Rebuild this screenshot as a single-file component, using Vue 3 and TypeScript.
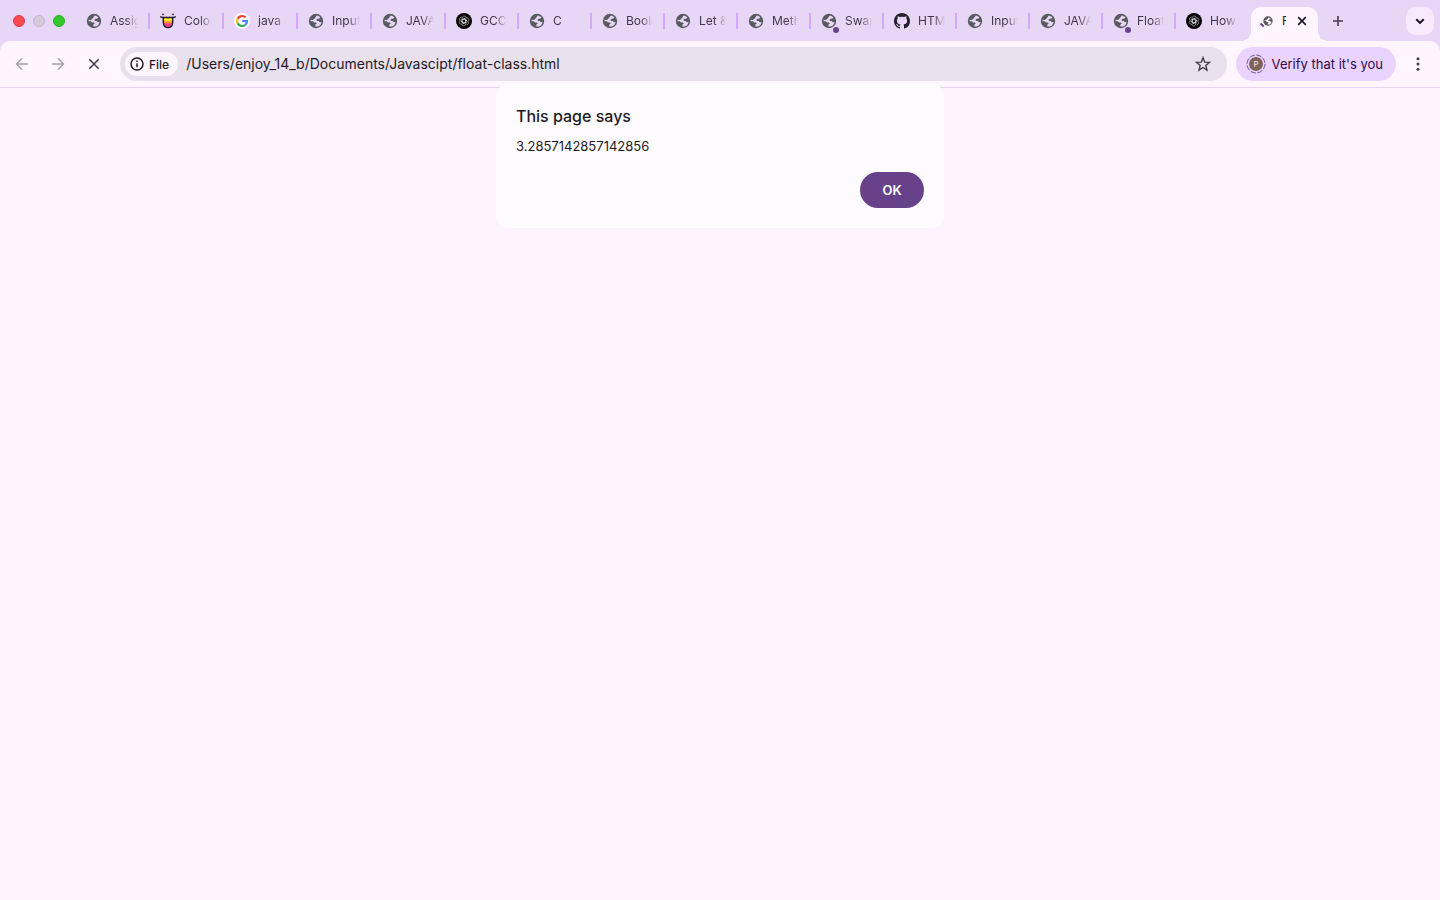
<script setup lang="ts">
import { ref } from 'vue'

type IconName = 'globe' | 'mask' | 'google' | 'gpt' | 'github'

interface Tab {
  title: string
  icon: IconName
  wide?: boolean
  dot?: boolean
}

const tabs: Tab[] = [
  { title: 'Assig', icon: 'globe', wide: true },
  { title: 'Color', icon: 'mask', wide: true },
  { title: 'java s', icon: 'google', wide: true },
  { title: 'Input', icon: 'globe', wide: true },
  { title: 'JAVA', icon: 'globe', wide: true },
  { title: 'GCC', icon: 'gpt' },
  { title: 'C', icon: 'globe' },
  { title: 'Boole', icon: 'globe' },
  { title: 'Let &', icon: 'globe' },
  { title: 'Meth', icon: 'globe' },
  { title: 'Swap', icon: 'globe', dot: true },
  { title: 'HTM', icon: 'github' },
  { title: 'Input', icon: 'globe' },
  { title: 'JAVA', icon: 'globe' },
  { title: 'Float', icon: 'globe', dot: true },
  { title: 'How', icon: 'gpt' },
]

const petals = [0, 60, 120, 180, 240, 300]
const url = ref('/Users/enjoy_14_b/Documents/Javascipt/float-class.html')
</script>

<template>
  <div class="browser">
    <header class="strip">
      <div class="lights">
        <button class="light red" aria-label="Close window"></button>
        <button class="light grey" aria-label="Minimise window"></button>
        <button class="light green" aria-label="Zoom window"></button>
      </div>
      <nav class="tabs" aria-label="Tabs">
        <button v-for="(tab, i) in tabs" :key="i" class="tab" :class="{ wide: tab.wide, last: i === tabs.length - 1 }">
          <span class="favicon">
            <svg v-if="tab.icon === 'globe'" viewBox="0 0 16 16">
              <circle cx="8" cy="8" r="7.200" fill="#575a5f" />
              <path d="M8.700 2.500c1.500.2 2.800.9 3.700 2.100l-1.300 1.200H9.600L8.300 7.100l.9.9h1.500l1 1.200 1.900-.2c-.3 2.200-1.800 4-4 4.500H7.300v-1.800l1.500-1.100-.9-1.200H6.100L4.800 8.200H2.500c0-.6.1-1 .2-1.400l2.200.3L6.800 5.200z" fill="#e8d6f6" />
            </svg>
            <svg v-else-if="tab.icon === 'mask'" viewBox="0 0 16 16">
              <path d="M3.200 4.200h9.600v5.300c0 3-2 5.200-4.800 5.200s-4.800-2.200-4.800-5.200z" fill="#ffe51f" />
              <path d="M3.500 8.200h9v3h-9z" fill="#ff9434" />
              <path d="M3.600 10.300h8.800c-.5 2.700-2.100 4.200-4.400 4.200s-3.900-1.500-4.400-4.200z" fill="#f0428d" />
              <path d="M.3 3.600c1.200.9 2.100.9 3 .9h9.400c.9 0 1.800 0 3-.9M3.300 4.500v5c0 3 2 5.100 4.700 5.100s4.700-2.100 4.700-5.100v-5" fill="none" stroke="#21182b" stroke-width="1.400" />
              <circle cx="3" cy="1.300" r=".9" fill="#21182b" />
              <circle cx="13" cy="1.300" r=".9" fill="#21182b" />
            </svg>
            <svg v-else-if="tab.icon === 'google'" viewBox="0 0 16 16">
              <circle cx="8" cy="8" r="8" fill="#fff" />
              <g fill="none" stroke-width="2.200">
                <path d="M11.600 4.500A5 5 0 0 0 3.600 5.700" stroke="#ea4335" />
                <path d="M3.600 5.700a5 5 0 0 0 0 4.600" stroke="#fbbc05" />
                <path d="M3.600 10.300a5 5 0 0 0 7.700 1.500" stroke="#34a853" />
                <path d="M11.300 11.800A5 5 0 0 0 12.900 8H8.200" stroke="#4285f4" />
              </g>
            </svg>
            <svg v-else-if="tab.icon === 'gpt'" viewBox="0 0 16 16">
              <circle cx="8" cy="8" r="8" fill="#000" />
              <g fill="none" stroke="#d9d6db" stroke-width=".6">
                <path v-for="a in petals" :key="a" :transform="`rotate(${a} 8 8)`" d="M6.200 9V5.100a2.200 2.200 0 0 1 4-1.200M6.200 7l2-1.200 2.900 1.700" />
              </g>
            </svg>
            <svg v-else viewBox="0 0 16 16">
              <path fill="#24202b" d="M8 0C3.580 0 0 3.580 0 8c0 3.540 2.290 6.530 5.470 7.590.4.070.55-.17.55-.38 0-.19-.01-.82-.01-1.490-2.010.37-2.530-.49-2.690-.94-.09-.23-.48-.94-.82-1.130-.28-.15-.68-.52-.01-.53.63-.01 1.080.58 1.230.82.72 1.210 1.870.87 2.330.66.07-.52.28-.87.51-1.070-1.780-.2-3.640-.89-3.640-3.950 0-.87.31-1.590.82-2.150-.08-.2-.36-1.020.08-2.120 0 0 .67-.21 2.200.82.64-.18 1.320-.27 2-.27s1.360.09 2 .27c1.530-1.040 2.200-.82 2.200-.82.44 1.100.16 1.920.08 2.120.51.56.82 1.270.82 2.150 0 3.070-1.870 3.750-3.650 3.950.29.25.54.73.54 1.480 0 1.070-.01 1.930-.01 2.200 0 .21.15.46.55.38A8.010 8.010 0 0 0 16 8c0-4.420-3.580-8-8-8z" />
            </svg>
            <i v-if="tab.dot" class="dot"></i>
          </span>
          <span class="title">{{ tab.title }}</span>
        </button>
      </nav>
      <div class="active">
        <svg class="loading" viewBox="0 0 16 16">
          <circle cx="9" cy="8" r="4.700" fill="#575a5f" />
          <path d="M9.400 4.400l2.400 1.400-.8.800H10l-.8.800.6.600h1l.6.8 1.200-.1c-.2 1.400-1.200 2.600-2.600 2.900H8.600v-1.200l.9-.7-.5-.8H7.800L7 8.100H5.500l.1-.8 1.400.1 1.200-1.200z" fill="#fef5fe" />
          <path d="M1.500 10.600l3.200 2.900" fill="none" stroke="#67418a" stroke-width="2" />
        </svg>
        <span class="active-title">F</span>
        <button class="plain" aria-label="Close tab">
          <svg viewBox="0 0 16 16" width="16" height="16"><path d="M4.200 4.200l7.600 7.600M11.800 4.200l-7.600 7.600" stroke="#1f1728" stroke-width="1.700" /></svg>
        </button>
      </div>
      <button class="plain new-tab" aria-label="New tab">
        <svg viewBox="0 0 16 16" width="16" height="16"><path d="M8 3v10M3 8h10" stroke="#463b50" stroke-width="1.600" /></svg>
      </button>
      <button class="search" aria-label="Search tabs">
        <svg viewBox="0 0 16 16" width="16" height="16"><path d="M4.300 6.200L8 9.900l3.700-3.700" fill="none" stroke="#1b1224" stroke-width="2" /></svg>
      </button>
    </header>

    <div class="toolbar">
      <div class="nav">
        <button class="plain" aria-label="Back">
          <svg viewBox="0 0 16 16" width="16" height="16"><path d="M14 8H3M8 2.500L2.500 8 8 13.500" fill="none" stroke="#a9a0ad" stroke-width="1.500" /></svg>
        </button>
        <button class="plain" aria-label="Forward">
          <svg viewBox="0 0 16 16" width="16" height="16"><path d="M2 8h11M8 2.500L13.500 8 8 13.500" fill="none" stroke="#a9a0ad" stroke-width="1.500" /></svg>
        </button>
        <button class="plain" aria-label="Stop loading">
          <svg viewBox="0 0 16 16" width="16" height="16"><path d="M3.300 3.300l9.400 9.400M12.700 3.300l-9.400 9.400" stroke="#463b50" stroke-width="1.600" /></svg>
        </button>
      </div>
      <div class="omnibox">
        <button class="chip">
          <svg viewBox="0 0 16 16" width="16" height="16">
            <circle cx="8" cy="8" r="6" fill="none" stroke="#1f1b22" stroke-width="1.500" />
            <path d="M8 7.200v4" stroke="#1f1b22" stroke-width="1.500" />
            <path d="M8 4.500v1.500" stroke="#1f1b22" stroke-width="1.500" />
          </svg>
          <span>File</span>
        </button>
        <input v-model="url" class="url" type="text" aria-label="Address" spellcheck="false" />
        <button class="plain" aria-label="Bookmark this page">
          <svg viewBox="0 0 16 16" width="16" height="16"><path d="M8 1.700l1.700 4.400 4.800.3-3.700 3 1.200 4.700L8 11.500l-4 2.600 1.200-4.700-3.700-3 4.800-.3z" fill="none" stroke="#463f4b" stroke-width="1.400" /></svg>
        </button>
      </div>
      <button class="profile">
        <svg viewBox="0 0 20 20" width="20" height="20">
          <circle cx="10" cy="10" r="9" fill="none" stroke="#76539a" stroke-width="1" stroke-dasharray="5.500 1.570" />
          <circle cx="10" cy="10" r="7" fill="#7f6259" />
          <text x="10" y="13" text-anchor="middle" class="initial">P</text>
        </svg>
        <span>Verify that it's you</span>
      </button>
      <button class="plain menu" aria-label="Menu">
        <svg viewBox="0 0 16 16" width="16" height="16" fill="#463b50"><circle cx="8" cy="2.800" r="1.500" /><circle cx="8" cy="8" r="1.500" /><circle cx="8" cy="13.200" r="1.500" /></svg>
      </button>
    </div>

    <main class="page"></main>

    <section class="dialog" role="alertdialog" aria-labelledby="dialog-title" aria-describedby="dialog-text">
      <h1 id="dialog-title">This page says</h1>
      <p id="dialog-text">3.2857142857142856</p>
      <button class="ok">OK</button>
    </section>
  </div>
</template>

<style>
body {
  background: #fef5fe;
}
</style>

<style scoped>
.browser {
  position: relative;
  display: flex;
  flex-direction: column;
  min-height: 100vh;
  background: #fef5fe;
  font-family: Inter, "Liberation Sans", sans-serif;
  color: #1e1a22;
}
.browser * {
  box-sizing: border-box;
}
button {
  font-family: inherit;
  color: inherit;
  border: 0;
  padding: 0;
  margin: 0;
  background: none;
}
svg {
  display: block;
  flex: none;
}
.plain {
  display: flex;
  flex: none;
}
.strip {
  display: flex;
  align-items: center;
  height: 51px;
  padding: 0 6px 10px 13px;
  margin-bottom: -10px;
  background: #e8d6f6;
}
.lights {
  display: flex;
  flex: none;
  gap: 8px;
  width: 63px;
}
.light {
  width: 12px;
  height: 12px;
  border-radius: 50%;
  border: 1px solid;
}
.red {
  background: #fb4a51;
  border-color: #dc3a48;
}
.grey {
  background: #d6cadb;
  border-color: #c2b4c9;
}
.green {
  background: #35c82f;
  border-color: #27ae27;
}
.tabs {
  display: flex;
  min-width: 0;
}
.tab {
  display: flex;
  align-items: center;
  gap: 8px;
  flex: 0 1 auto;
  width: 73px;
  min-width: 0;
  height: 16px;
  padding: 0 10px;
  border-right: 2px solid #d2a8ff;
  font-size: 12px;
  line-height: 16px;
  color: #41364b;
}
.tab.wide {
  width: 74px;
}
.tab.last {
  border-right-color: transparent;
}
.favicon {
  position: relative;
  flex: none;
  width: 16px;
  height: 16px;
}
.dot {
  position: absolute;
  right: -2px;
  bottom: -4px;
  width: 6px;
  height: 6px;
  border-radius: 50%;
  background: #67418a;
}
.title {
  flex: 1;
  min-width: 0;
  overflow: hidden;
  white-space: nowrap;
  text-align: left;
  mask-image: linear-gradient(to right, #000 calc(100% - 12px), transparent);
}
.active {
  position: relative;
  display: flex;
  align-items: center;
  flex: none;
  align-self: flex-end;
  width: 67px;
  height: 34px;
  margin-left: 2px;
  padding: 0 8px 7px;
  border-radius: 10px 10px 0 0;
  background: #fef5fe;
  font-size: 12px;
}
.active::before,
.active::after {
  content: "";
  position: absolute;
  bottom: 0;
  width: 10px;
  height: 10px;
}
.active::before {
  right: 100%;
  background: radial-gradient(circle at 0 0, transparent 10px, #fef5fe 10px);
}
.active::after {
  left: 100%;
  background: radial-gradient(circle at 100% 0, transparent 10px, #fef5fe 10px);
}
.loading {
  width: 16px;
  height: 16px;
  margin-right: 7px;
}
.active-title {
  width: 4px;
  margin-right: 8px;
  overflow: hidden;
  line-height: 16px;
}
.new-tab {
  margin-left: 12px;
}
.search {
  display: flex;
  align-items: center;
  justify-content: center;
  flex: none;
  width: 28px;
  height: 28px;
  margin-left: auto;
  border-radius: 10px;
  background: #f7eafd;
}
.toolbar {
  display: flex;
  align-items: center;
  height: 47px;
  padding: 0 14px;
  border-radius: 10px 10px 0 0;
  border-bottom: 1px solid #e8d6ee;
  background: #fef5fe;
}
.nav {
  display: flex;
  flex: none;
  gap: 20px;
}
.omnibox {
  display: flex;
  align-items: center;
  flex: 1;
  min-width: 0;
  height: 34px;
  margin-left: 18px;
  padding: 0 16px 0 5px;
  border-radius: 17px;
  background: #e9e0ed;
}
.chip {
  display: flex;
  align-items: center;
  flex: none;
  gap: 4px;
  height: 24px;
  padding: 0 9px 0 4px;
  border-radius: 12px;
  background: #fef5fe;
  font-size: 12px;
  font-weight: 500;
}
.url {
  flex: 1;
  min-width: 0;
  margin: 0 8px;
  padding: 0;
  border: 0;
  outline: 0;
  background: none;
  font-family: inherit;
  font-size: 14px;
  line-height: 20px;
  color: #1e1a22;
}
.profile {
  display: flex;
  align-items: center;
  flex: none;
  gap: 6px;
  height: 34px;
  margin-left: 9px;
  padding: 0 13px 0 10px;
  border-radius: 17px;
  background: #ebd3ff;
  font-size: 13px;
  color: #2c0b51;
}
.initial {
  font-size: 8px;
  fill: #f2e8e2;
}
.menu {
  margin-left: 14px;
}
.page {
  flex: 1;
}
.dialog {
  position: absolute;
  top: 84px;
  left: 0;
  right: 0;
  display: flex;
  flex-direction: column;
  width: 448px;
  margin: 0 auto;
  padding: 20px;
  border-radius: 12px;
  background: #fefbff;
  box-shadow: 0 4px 12px rgba(150, 60, 180, 0.03);
}
h1 {
  margin: 0;
  font-size: 16px;
  line-height: 24px;
  font-weight: 500;
}
p {
  margin: 8px 0 16px;
  font-size: 13px;
  line-height: 20px;
}
.ok {
  align-self: flex-end;
  width: 64px;
  height: 36px;
  border-radius: 18px;
  background: #67418a;
  color: #fff;
  font-size: 13px;
  font-weight: 600;
}
</style>
